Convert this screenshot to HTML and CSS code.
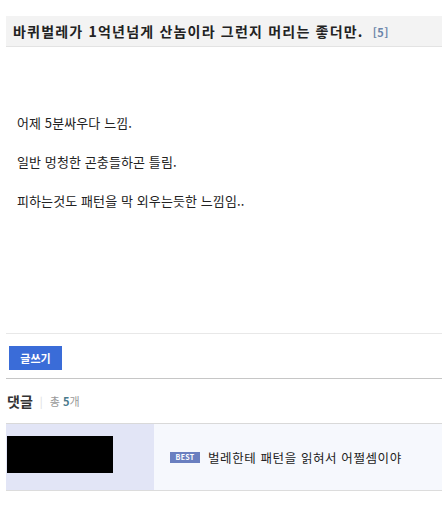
FILE: index.html
```html
<!DOCTYPE html>
<html lang="ko">
<head>
    <meta charset="UTF-8">
    <meta name="viewport" content="width=device-width, initial-scale=1.0">
    <title>바퀴벌레</title>
    <link rel="stylesheet" href="styles.css">
</head>
<body>
    <div class="post-head">
        <h1>바퀴벌레가 1억년넘게 산놈이라 그런지 머리는 좋더만. <span class="count">[5]</span></h1>
    </div>
    <div class="post-body">
        <p>어제 5분싸우다 느낌.</p>
        <p>일반 멍청한 곤충들하곤 틀림.</p>
        <p>피하는것도 패턴을 막 외우는듯한 느낌임..</p>
    </div>
    <div class="actions">
        <button type="button">글쓰기</button>
    </div>
    <div class="comments">
        <div class="comments-head">
            <strong>댓글</strong>
            <span class="bar">|</span>
            <span class="total">총 <b>5</b>개</span>
        </div>
        <div class="comment">
            <div class="author">
                <div class="hidden-name"></div>
            </div>
            <div class="content">
                <span class="best">BEST</span>
                <span class="text">벌레한테 패턴을 읽혀서 어쩔셈이야</span>
            </div>
        </div>
    </div>
</body>
</html>
```

FILE: styles.css
```css
body {
    margin: 0;
    background: #fff;
    font-family: "Noto Sans CJK KR", "Liberation Sans", sans-serif;
    color: #333;
}
.post-head {
    margin: 16px 0 0 6px;
    height: 30px;
    background: #f3f3f3;
    border-bottom: 1px solid #e3e3e3;
    display: flex;
    align-items: center;
}
.post-head h1 {
    margin: 0 0 0 7px;
    font-size: 14px;
    font-weight: bold;
    color: #222;
    letter-spacing: 1.2px;
}
.count {
    color: #6b85aa;
    font-size: 11px;
    margin-left: 4px;
    letter-spacing: 0.5px;
}
.post-body {
    margin-left: 6px;
    padding: 67px 0 0 11px;
    height: 219px;
    border-bottom: 1px solid #e8e8e8;
}
.post-body p {
    margin: 0 0 21px;
    font-size: 13px;
    line-height: 18px;
    color: #222;
    letter-spacing: 0.1px;
}
.actions {
    margin-left: 6px;
    padding: 10px 3px;
    height: 24px;
    border-bottom: 1px solid #c6c6c6;
}
.actions button {
    width: 53px;
    height: 24px;
    padding: 0;
    border: none;
    background: #3a6cd8;
    color: #fff;
    font-family: inherit;
    font-size: 11px;
    font-weight: bold;
}
.comments {
    margin: 0 0 0 6px;
}
.comments-head {
    height: 44px;
    display: flex;
    align-items: center;
    padding: 0 0 0 1px;
    font-size: 11px;
    color: #999;
}
.comments-head strong {
    font-size: 14px;
    color: #333;
}
.comments-head .bar {
    color: #ddd;
    margin: 0 7px;
}
.comments-head b {
    color: #4a7a8c;
}
.comment {
    display: flex;
    height: 66px;
    border-top: 1px solid #d9d9d9;
    border-bottom: 1px solid #dcdcdc;
}
.author {
    width: 147px;
    background: #e2e5f6;
    padding: 12px 0 0 1px;
}
.hidden-name {
    width: 106px;
    height: 37px;
    background: #000;
}
.content {
    flex: 1;
    background: #f6f8fd;
    display: flex;
    align-items: center;
    padding-left: 16px;
}
.best {
    display: inline-block;
    width: 30px;
    height: 11px;
    line-height: 11px;
    background: #6a7fc0;
    color: #fff;
    font-size: 7px;
    font-weight: bold;
    text-align: center;
    margin-right: 8px;
    letter-spacing: 0.3px;
}
.text {
    font-size: 12.5px;
    color: #222;
    letter-spacing: 0.6px;
}
```
